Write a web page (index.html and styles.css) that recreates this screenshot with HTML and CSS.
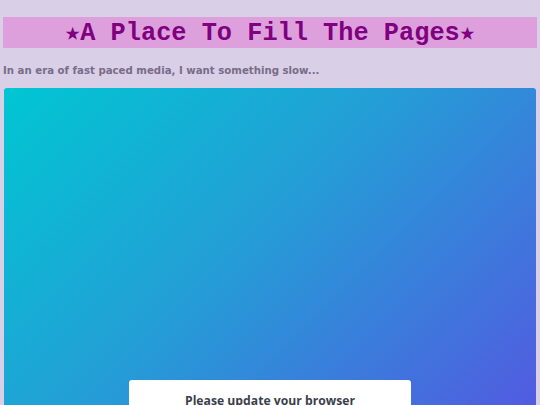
FILE: index.html
```html
<!DOCTYPE html>
<html>
<head>
<meta charset="utf-8">
<link rel="stylesheet" href="styles.css">
</head>
<body>
<header class="banner"><h1 class="title">★A Place To Fill The Pages★</h1></header>
<p class="tagline">In an era of fast paced media, I want something slow...</p>
<main class="stage">
  <div class="notice"><span class="notice-text">Please update your browser</span></div>
</main>
</body>
</html>
```
FILE: styles.css
```css
html, body { margin: 0; padding: 0; }
body {
  background: #d9d0e7;
  padding: 17px 3px 0 3px;
  height: 405px;
  box-sizing: border-box;
  overflow: hidden;
  font-family: "DejaVu Sans", sans-serif;
}
.banner {
  background: #dda0dd;
  height: 31px;
  display: flex;
  align-items: center;
  justify-content: center;
}
.title {
  margin: 0;
  font-family: "Liberation Mono", "Courier New", monospace;
  font-weight: bold;
  font-size: 25.3px;
  color: #800080;
  line-height: 31px;
  padding-top: 2px;
}
.tagline {
  margin: 17px 0 0 0;
  font-size: 10.2px;
  font-weight: bold;
  color: #786c88;
  line-height: 12px;
}
.stage {
  margin: 11px 1px 0 1px;
  height: 400px;
  border-radius: 3px;
  background: linear-gradient(135deg, #00c6d2 0%, #22a0d6 40%, #5a4fe2 100%);
  display: flex;
  justify-content: center;
  padding-top: 292px;
  box-sizing: border-box;
}
.notice {
  width: 282px;
  height: 80px;
  background: #ffffff;
  border-radius: 3px;
  display: flex;
  justify-content: center;
  padding-top: 12px;
  box-sizing: border-box;
}
.notice-text {
  font-family: "Open Sans", sans-serif;
  font-weight: bold;
  font-size: 12.2px;
  color: #3b3f4a;
}
```
